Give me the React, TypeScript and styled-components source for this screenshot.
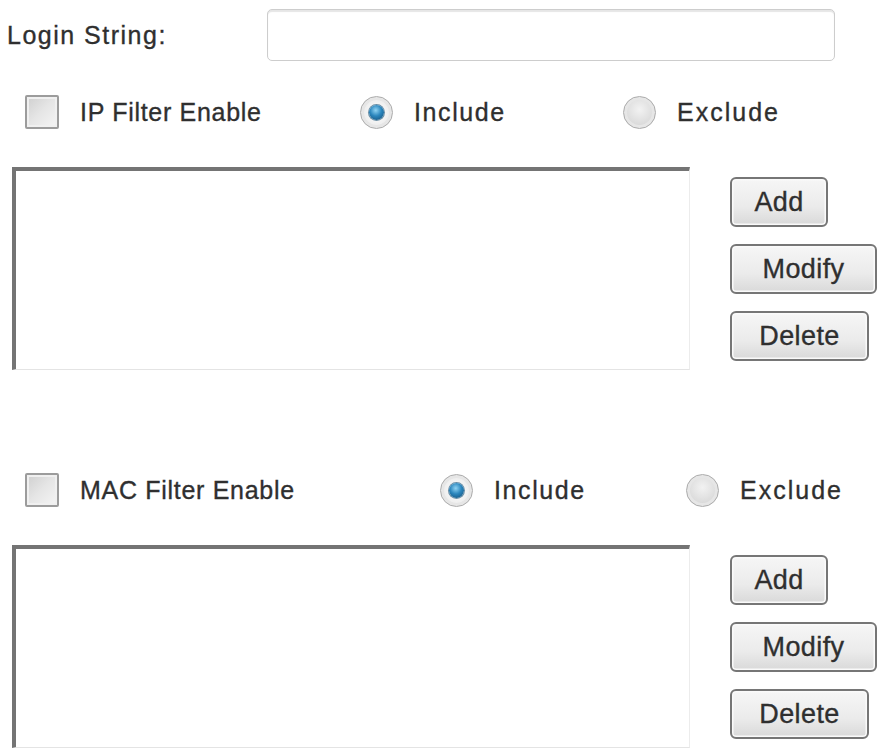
import styled, { createGlobalStyle } from "styled-components";

const GlobalStyle = createGlobalStyle`
  html, body {
    margin: 0;
    padding: 0;
    background: #ffffff;
  }
  body {
    font-family: "Liberation Sans", Arial, sans-serif;
    color: #333333;
  }
`;

interface FilterProps {
  name: string;
  cols: string;
}

function FilterSection({ name, cols }: FilterProps) {
  return (
    <>
      <FilterRow $cols={cols}>
        <Option>
          <CheckBox />
          <Label>{name} Filter Enable</Label>
        </Option>
        <Option>
          <Radio>
            <RadioDot />
          </Radio>
          <Label $spacing={1.6}>Include</Label>
        </Option>
        <Option>
          <Radio $off />
          <Label $spacing={2}>Exclude</Label>
        </Option>
      </FilterRow>
      <ListSection>
        <ListBox />
        <ButtonColumn>
          <Button $width={98}>Add</Button>
          <Button $width={147}>Modify</Button>
          <Button $width={139}>Delete</Button>
        </ButtonColumn>
      </ListSection>
    </>
  );
}

export default function App() {
  return (
    <>
      <GlobalStyle />
      <Page>
        <LoginRow>
          <Label $spacing={1.5}>Login String:</Label>
          <TextField type="text" />
        </LoginRow>
        <FilterSection name="IP" cols="335px 263px auto" />
        <Spacer />
        <FilterSection name="MAC" cols="415px 246px auto" />
      </Page>
    </>
  );
}

const Page = styled.div`
  display: flex;
  flex-direction: column;
  width: 884px;
  padding-top: 9px;
`;

const LoginRow = styled.div`
  display: grid;
  grid-template-columns: 260px 568px;
  align-items: center;
  padding-left: 7px;
  height: 52px;
`;

const Label = styled.span<{ $spacing?: number }>`
  font-size: 25px;
  letter-spacing: ${(p) => p.$spacing ?? 0.7}px;
  color: #2f2f2f;
  -webkit-text-stroke: 0.35px #2f2f2f;
  white-space: nowrap;
`;

const TextField = styled.input`
  box-sizing: border-box;
  height: 52px;
  width: 568px;
  margin: 0;
  border: 1.5px solid #cdcdcd;
  border-radius: 5px;
  background: #fff;
  box-shadow: inset 0 2px 1px #e6e6e6;
  outline: none;
`;

const FilterRow = styled.div<{ $cols: string }>`
  display: grid;
  grid-template-columns: ${(p) => p.$cols};
  align-items: center;
  margin-top: 34px;
  padding-left: 25px;
  height: 34px;
`;

const Option = styled.div`
  display: flex;
  align-items: center;
  gap: 21px;
`;

const CheckBox = styled.span`
  box-sizing: border-box;
  width: 34px;
  height: 34px;
  flex-shrink: 0;
  border: 2px solid #9c9c9c;
  border-radius: 2px;
  background: linear-gradient(135deg, #cfcfcf 0%, #e6e6e6 50%, #f5f5f5 100%);
  box-shadow: inset 0 0 0 2px #f0f0f0;
`;

const Radio = styled.span<{ $off?: boolean }>`
  box-sizing: border-box;
  display: flex;
  align-items: center;
  justify-content: center;
  width: 33px;
  height: 33px;
  flex-shrink: 0;
  border-radius: 50%;
  border: 1.5px solid #acacac;
  background: ${(p) =>
    p.$off
      ? "radial-gradient(circle at 50% 40%, #f2f2f2 0%, #dcdcdc 60%, #c6c6c6 100%)"
      : "radial-gradient(circle, #ffffff 0%, #efefef 55%, #c4c4c4 100%)"};
  box-shadow: inset 0 0 0 3px #e6e6e6;
`;

const RadioDot = styled.span`
  width: 15px;
  height: 15px;
  border-radius: 50%;
  background: radial-gradient(circle at 45% 35%, #8fd3f3 0%, #2b86bd 45%, #104a72 100%);
  box-shadow: 0 0 0 1px #6b8fa6;
`;

const ListSection = styled.div`
  display: flex;
  align-items: flex-start;
  margin-top: 38px;
  padding-left: 12px;
`;

const ListBox = styled.div`
  box-sizing: border-box;
  width: 678px;
  height: 203px;
  flex-shrink: 0;
  background: #fff;
  border-top: 4px solid #747474;
  border-left: 4px solid #747474;
  border-right: 1px solid #ececec;
  border-bottom: 1px solid #e4e4e4;
`;

const ButtonColumn = styled.div`
  display: flex;
  flex-direction: column;
  gap: 17px;
  margin-left: 40px;
  padding-top: 10px;
`;

const Button = styled.button<{ $width: number }>`
  box-sizing: border-box;
  width: ${(p) => p.$width}px;
  height: 50px;
  margin: 0;
  padding: 0;
  border: 2px solid #767676;
  border-radius: 6px;
  background: linear-gradient(to bottom, #f6f6f6 0%, #ebebeb 60%, #d9d9d9 100%);
  box-shadow: inset 0 0 0 1.5px #fafafa;
  font-family: "Liberation Sans", Arial, sans-serif;
  font-size: 27px;
  letter-spacing: 0.4px;
  color: #2f2f2f;
  -webkit-text-stroke: 0.35px #2f2f2f;
`;

const Spacer = styled.div`
  height: 69px;
`;
